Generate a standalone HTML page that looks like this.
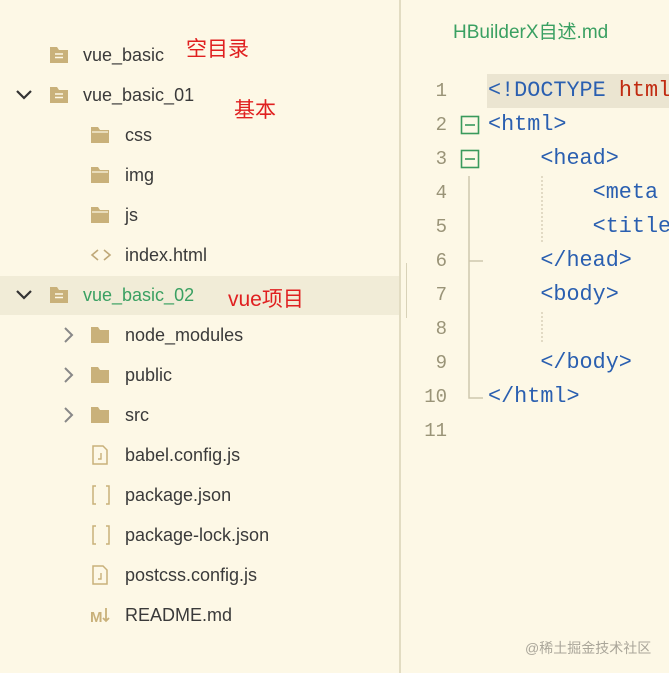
<!DOCTYPE html>
<html><head><meta charset="utf-8"><style>
body{margin:0;width:669px;height:673px;background:#fdf8e6;position:relative;overflow:hidden;font-family:"Liberation Sans","Noto Sans CJK SC",sans-serif}
.t{position:absolute;font-size:18px;color:#3a3a3a;line-height:24px;white-space:nowrap}
.r{position:absolute;font-size:21px;color:#e02020;line-height:24px;white-space:nowrap}
svg{position:absolute}
.ln{position:absolute;width:40px;left:407px;text-align:right;font-family:"Liberation Mono",monospace;font-size:19px;color:#9a9478;line-height:34px}
.c{position:absolute;left:488px;font-family:"Liberation Mono",monospace;font-size:21.8px;color:#2a5fb0;line-height:34px;white-space:pre}
</style></head><body>
<div style="position:absolute;left:0;top:276px;width:399px;height:39px;background:#f1ecd7"></div>
<div style="position:absolute;left:399px;top:0;width:2px;height:673px;background:#e2dcc2"></div>
<div style="position:absolute;left:406px;top:263px;width:1px;height:55px;background:#d8d2b8"></div>

<svg width="400" height="673" style="left:0;top:0">
<defs>
<g id="pf"><path d="M0 0h7l2 3h9v13H0z" fill="#c9b17a"/><path d="M5 7h8M5 10.5h8" stroke="#fdf8e6" stroke-width="1.6"/></g>
<g id="of"><path d="M0 0h7l2 3h9v13H0z" fill="#c9b17a"/><path d="M1 5h16" stroke="#fdf8e6" stroke-width="1.2"/></g>
<g id="cf"><path d="M0 0h7l2 3h9v13H0z" fill="#c9b17a"/></g>
<g id="jf"><path d="M1 0h10l4 4v14H1z" fill="none" stroke="#c9b17a" stroke-width="1.5"/><path d="M9 7v6h-3" fill="none" stroke="#c9b17a" stroke-width="1.4"/></g>
<g id="br"><path d="M4 0H1v18h3M14 0h3v18h-3" fill="none" stroke="#c9b17a" stroke-width="1.5"/></g>
</defs>
<use href="#pf" x="50" y="47"/>
<path d="M17 91l7 7 7-7" fill="none" stroke="#333" stroke-width="2.2"/>
<use href="#pf" x="50" y="87"/>
<use href="#of" x="91" y="127"/>
<use href="#of" x="91" y="167"/>
<use href="#of" x="91" y="207"/>
<path d="M98 250l-6 5 6 5M104 250l6 5-6 5" fill="none" stroke="#bfa878" stroke-width="1.6"/>
<path d="M17 291l7 7 7-7" fill="none" stroke="#333" stroke-width="2.2"/>
<use href="#pf" x="50" y="287"/>
<path d="M65 328l7 7-7 7" fill="none" stroke="#888" stroke-width="2"/>
<use href="#cf" x="91" y="327"/>
<path d="M65 368l7 7-7 7" fill="none" stroke="#888" stroke-width="2"/>
<use href="#cf" x="91" y="367"/>
<path d="M65 408l7 7-7 7" fill="none" stroke="#888" stroke-width="2"/>
<use href="#cf" x="91" y="407"/>
<use href="#jf" x="92" y="446"/>
<use href="#br" x="92" y="486"/>
<use href="#br" x="92" y="526"/>
<use href="#jf" x="92" y="566"/>
<text x="90" y="622" font-family="Liberation Sans" font-weight="bold" font-size="15" fill="#c9b17a">M</text>
<path d="M106 608v13M103 618l3 3 3-3" fill="none" stroke="#c9b17a" stroke-width="1.8"/>
</svg>
<div class="t" style="left:83px;top:43px">vue_basic</div>
<div class="r" style="left:186px;top:38px">空目录</div>
<div class="t" style="left:83px;top:83px">vue_basic_01</div>
<div class="r" style="left:234px;top:99px">基本</div>
<div class="t" style="left:125px;top:123px">css</div>
<div class="t" style="left:125px;top:163px">img</div>
<div class="t" style="left:125px;top:203px">js</div>
<div class="t" style="left:125px;top:243px">index.html</div>
<div class="t" style="left:83px;top:283px;color:#3aa062">vue_basic_02</div>
<div class="r" style="left:228px;top:288px">vue项目</div>
<div class="t" style="left:125px;top:323px">node_modules</div>
<div class="t" style="left:125px;top:363px">public</div>
<div class="t" style="left:125px;top:403px">src</div>
<div class="t" style="left:125px;top:443px">babel.config.js</div>
<div class="t" style="left:125px;top:483px">package.json</div>
<div class="t" style="left:125px;top:523px">package-lock.json</div>
<div class="t" style="left:125px;top:563px">postcss.config.js</div>
<div class="t" style="left:125px;top:603px">README.md</div>

<div class="t" style="left:453px;top:21px;color:#3aa062;font-size:19px">HBuilderX自述.md</div>
<div style="position:absolute;left:487px;top:74px;width:182px;height:34px;background:#ebe5d1"></div>
<svg width="269" height="673" style="left:400px;top:0">
<rect x="61.5" y="116.5" width="17" height="17" fill="none" stroke="#3a9a5c" stroke-width="1.6"/>
<path d="M65 125h10" stroke="#3a9a5c" stroke-width="1.6"/>
<rect x="61.5" y="150.5" width="17" height="17" fill="none" stroke="#3a9a5c" stroke-width="1.6"/>
<path d="M65 159h10" stroke="#3a9a5c" stroke-width="1.6"/>
<path d="M69 176v222h14M69 261h14" fill="none" stroke="#cfc7ad" stroke-width="1.5"/>
<path d="M142 176v66M142 312v32" stroke="#cfc7ad" stroke-width="1.2" stroke-dasharray="2 2"/>
</svg>
<div class="ln" style="top:74px">1<br>2<br>3<br>4<br>5<br>6<br>7<br>8<br>9<br>10<br>11</div>
<div class="c" style="top:74px">&lt;!DOCTYPE <span style="color:#c02a10">html</span>
&lt;html&gt;
    &lt;head&gt;
        &lt;meta
        &lt;title
    &lt;/head&gt;
    &lt;body&gt;

    &lt;/body&gt;
&lt;/html&gt;</div>
<div style="position:absolute;left:525px;top:638px;font-size:14px;color:#aaa69a">@稀土掘金技术社区</div>
</body></html>
